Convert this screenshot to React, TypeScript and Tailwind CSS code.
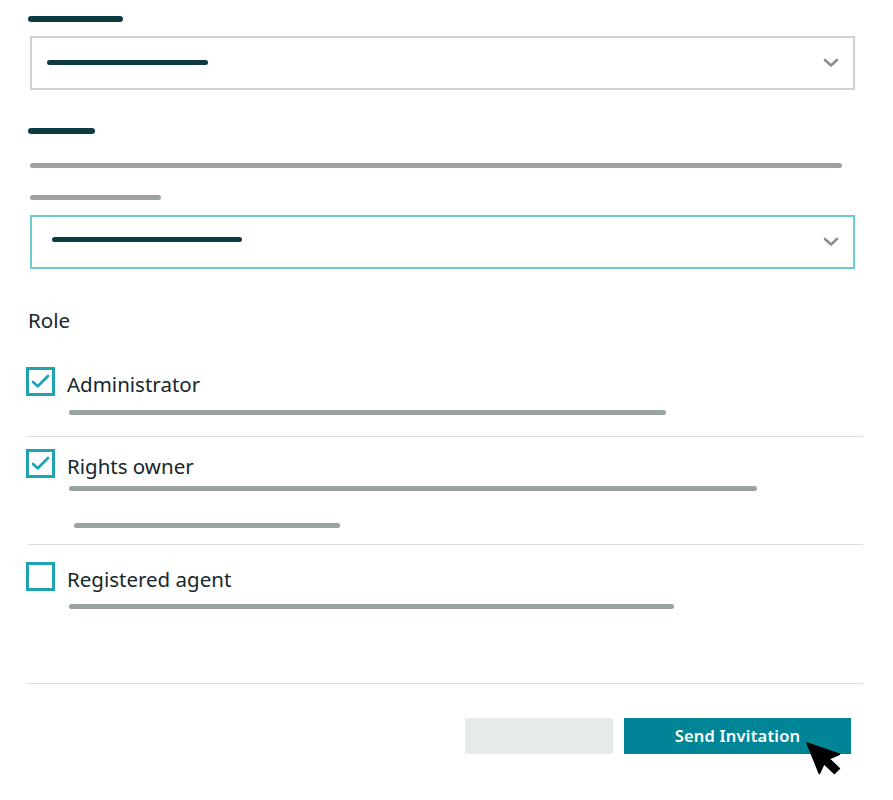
import React from "react";

function Chevron() {
  return (
    <svg width="16" height="10" viewBox="0 0 16 10" fill="none">
      <path d="M2 2l6 5.5L14 2" stroke="#8a8f91" strokeWidth="2.6" strokeLinecap="round" strokeLinejoin="round" />
    </svg>
  );
}

function Checkbox({ checked }: { checked: boolean }) {
  return (
    <div className="w-[29px] h-[29px] border-[3px] border-[#1fa3b3] flex items-center justify-center shrink-0 bg-white">
      {checked && (
        <svg width="19" height="15" viewBox="0 0 19 15" fill="none">
          <path d="M2 8l4.8 4.3L17 2" stroke="#1fa3b3" strokeWidth="2.7" strokeLinecap="round" strokeLinejoin="round" />
        </svg>
      )}
    </div>
  );
}

function Bar({ w, dark, thick }: { w: string; dark?: boolean; thick?: boolean }) {
  return <div className={`${w} ${thick ? "h-[6px]" : "h-[5px]"} rounded-full ${dark ? "bg-[#0e3a42]" : "bg-[#9aa2a2]"}`} />;
}

function Cursor() {
  return (
    <svg className="absolute left-[803px] top-[739px]" width="50" height="50" viewBox="0 0 50 50">
      <g transform="rotate(-22 4 4)">
        <path
          d="M4 4 L4 37 L12 29.5 L18 42.5 L24.5 39.8 L18.6 27 L30 26.6 Z"
          fill="#000"
          stroke="#000"
          strokeWidth="1.5"
          strokeLinejoin="round"
        />
      </g>
    </svg>
  );
}

function Option({ label, checked }: { label: string; checked: boolean }) {
  return (
    <div className="flex items-center gap-[12px] -ml-[2px] h-[29px]">
      <Checkbox checked={checked} />
      <span className="text-[20.5px] leading-[29px] translate-y-[3px]">{label}</span>
    </div>
  );
}

export default function App() {
  return (
    <div
      className="relative w-[893px] h-[800px] bg-white pl-[28px] pr-[30px] pt-[16px] overflow-hidden text-[#17262b]"
      style={{ fontFamily: '"Noto Sans", "Open Sans", sans-serif' }}
    >
      <Bar w="w-[95px]" dark thick />
      <div className="ml-[2px] mt-[14px] w-[825px] h-[54px] border-2 border-[#cfd2d2] flex items-center justify-between pl-[15px] pr-[14px]">
        <div className="mb-[2px]">
          <Bar w="w-[161px]" dark />
        </div>
        <Chevron />
      </div>

      <div className="mt-[38px]">
        <Bar w="w-[67px]" dark thick />
      </div>
      <div className="mt-[29px] ml-[2px]">
        <Bar w="w-[812px]" />
      </div>
      <div className="mt-[27px] ml-[2px]">
        <Bar w="w-[131px]" />
      </div>
      <div className="ml-[2px] mt-[15px] w-[825px] h-[54px] border-2 border-[#6ccad3] flex items-center justify-between pl-[20px] pr-[14px]">
        <div className="mb-[5px]">
          <Bar w="w-[190px]" dark />
        </div>
        <Chevron />
      </div>

      <div className="mt-[39px] text-[20.5px] leading-[24px]">Role</div>

      <div className="w-[835px] border-b border-[#dadddd] pt-[35px] pb-[21px]">
        <Option label="Administrator" checked />
        <div className="mt-[14px] ml-[41px]">
          <Bar w="w-[597px]" />
        </div>
      </div>

      <div className="w-[835px] border-b border-[#dadddd] pt-[12px] pb-[16px]">
        <Option label="Rights owner" checked />
        <div className="mt-[8px] ml-[41px]">
          <Bar w="w-[688px]" />
        </div>
        <div className="mt-[32px] ml-[46px]">
          <Bar w="w-[266px]" />
        </div>
      </div>

      <div className="w-[835px] border-b border-[#dadddd] pt-[17px] pb-[74px]">
        <Option label="Registered agent" checked={false} />
        <div className="mt-[13px] ml-[41px]">
          <Bar w="w-[605px]" />
        </div>
      </div>

      <div className="mt-[34px] flex justify-end gap-[11px] w-[823px]">
        <div className="w-[148px] h-[36px] bg-[#e4ebea]" />
        <button className="w-[227px] h-[36px] bg-[#008597] text-white font-semibold text-[16.5px] tracking-[0.2px]">
          Send Invitation
        </button>
      </div>

      <Cursor />
    </div>
  );
}
